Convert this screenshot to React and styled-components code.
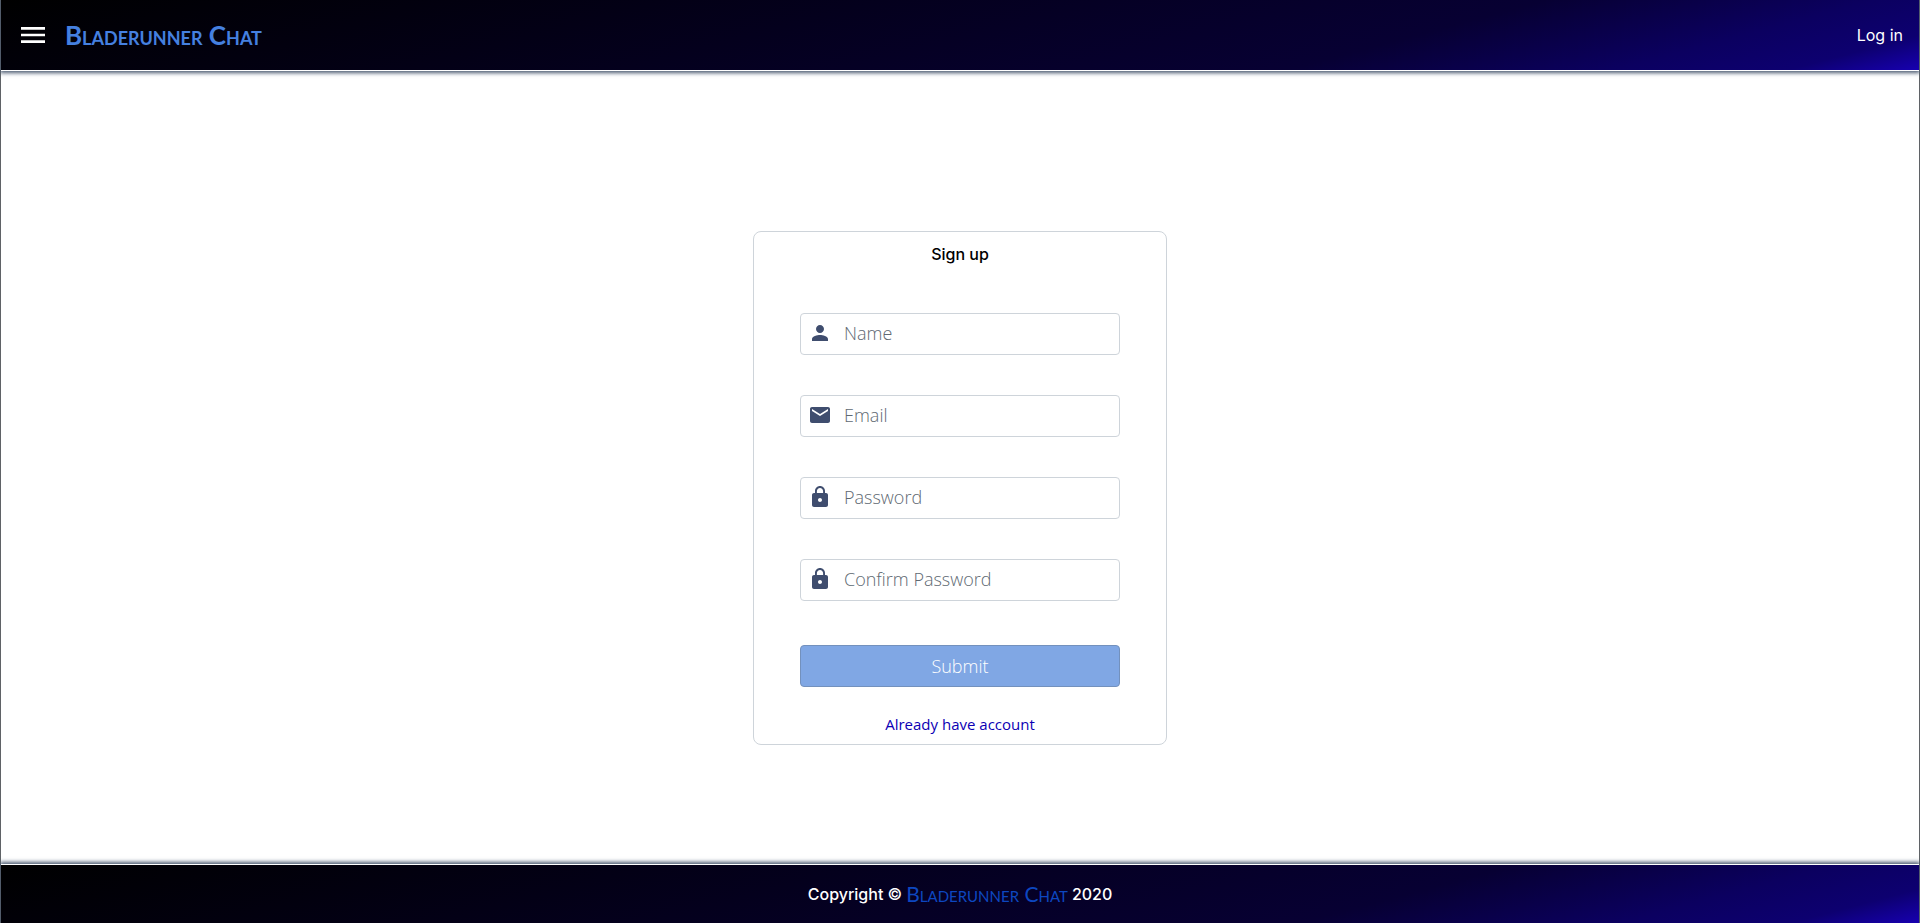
import React from "react";
import styled, { createGlobalStyle } from "styled-components";
import { MdMenu, MdPerson, MdEmail, MdLock } from "react-icons/md";

const night = "linear-gradient(165deg, #000000 0%, #070033 71%, #0b0060 86%, #0d0070 94%, #1700b0 100%)";
const uiFont = 'Inter, "Open Sans", sans-serif';
const formFont = '"Open Sans", "Noto Sans", sans-serif';

const GlobalStyle = createGlobalStyle`
  *, *::before, *::after { box-sizing: border-box; }
  body { margin: 0; background: #ffffff; }
`;

const Page = styled.div`
  display: flex;
  flex-direction: column;
  min-height: 100vh;
  border: solid #5f6266;
  border-width: 0 1px;
  font: 400 16px/24px ${uiFont};
`;

const Header = styled.header`
  display: flex;
  align-items: center;
  gap: 16px;
  height: 71px;
  padding: 0 16px;
  background: ${night} padding-box;
  border-bottom: 1px solid #ffffff;
  box-shadow: 0 1px 4px 1px #4a5a70;
`;

const MenuButton = styled.button`
  display: flex;
  padding: 0;
  border: 0;
  background: none;
  color: #ffffff;
  cursor: pointer;
`;

const Brand = styled.a`
  color: ${(p) => (p.$large ? "#4580e0" : "#0d47c0")};
  font-family: Lato, sans-serif;
  font-size: ${(p) => (p.$large ? "26px" : "21px")};
  font-weight: ${(p) => (p.$large ? 700 : 400)};
  font-variant: small-caps;
  text-decoration: none;
`;

const LoginLink = styled.a`
  margin-left: auto;
  color: #ffffff;
  text-decoration: none;
`;

const Main = styled.main`
  display: flex;
  flex: 1;
  align-items: center;
  justify-content: center;
  padding: 40px 16px 0;
`;

const Card = styled.section`
  width: 100%;
  max-width: 414px;
  padding: 10px 46px 8px;
  border: 1px solid #ced4da;
  border-radius: 8px;
  text-align: center;
`;

const Title = styled.h1`
  margin: 0 0 47px;
  font-size: 16px;
  line-height: 24px;
  font-weight: 500;
  color: #000000;
`;

const Form = styled.form`
  display: flex;
  flex-direction: column;
  gap: 40px;
  font-family: ${formFont};
`;

const Field = styled.label`
  display: flex;
  align-items: center;
  gap: 12px;
  height: 42px;
  padding: 0 7px 2px;
  border: 1px solid #ced4da;
  border-radius: 4px;
  color: #3f4d6e;
`;

const Input = styled.input`
  flex: 1;
  min-width: 0;
  padding: 0;
  border: 0;
  outline: 0;
  background: none;
  color: #3f4d6e;
  font: 300 18px/24px ${formFont};
  &::placeholder { color: #606972; opacity: 1; }
`;

const Submit = styled.button`
  height: 42px;
  margin-top: 4px;
  border: 1px solid #7391bd;
  border-radius: 4px;
  background: #80a7e4;
  color: #ffffff;
  font: 300 18px/24px ${formFont};
`;

const AccountLink = styled.a`
  display: block;
  width: fit-content;
  margin: 25px auto 0;
  color: #0c00b4;
  font-family: ${formFont};
  font-size: 15px;
  text-decoration: none;
`;

const Footer = styled.footer`
  display: flex;
  align-items: center;
  justify-content: center;
  gap: 4px;
  height: 59px;
  border-top: 1px solid #ffffff;
  background: ${night} padding-box;
  box-shadow: 0 -1px 4px 1px #4a5a70;
  color: #ffffff;
  font-weight: 500;
`;

const fields = [
  { name: "name", label: "Name", type: "text", Icon: MdPerson },
  { name: "email", label: "Email", type: "email", Icon: MdEmail },
  { name: "password", label: "Password", type: "password", Icon: MdLock },
  { name: "confirm", label: "Confirm Password", type: "password", Icon: MdLock },
];

export default function App() {
  return (
    <>
      <GlobalStyle />
      <Page>
        <Header>
          <MenuButton aria-label="Menu"><MdMenu size={32} /></MenuButton>
          <Brand href="#" $large>Bladerunner Chat</Brand>
          <LoginLink href="#login">Log in</LoginLink>
        </Header>
        <Main>
          <Card>
            <Title>Sign up</Title>
            <Form onSubmit={(e) => e.preventDefault()}>
              {fields.map(({ name, label, type, Icon }) => (
                <Field key={name} htmlFor={name}>
                  <Icon size={24} aria-hidden="true" />
                  <Input id={name} name={name} type={type} placeholder={label} aria-label={label} />
                </Field>
              ))}
              <Submit type="submit">Submit</Submit>
            </Form>
            <AccountLink href="#login">Already have account</AccountLink>
          </Card>
        </Main>
        <Footer>
          <span>Copyright ©</span>
          <Brand href="#">Bladerunner Chat</Brand>
          <span>2020</span>
        </Footer>
      </Page>
    </>
  );
}
